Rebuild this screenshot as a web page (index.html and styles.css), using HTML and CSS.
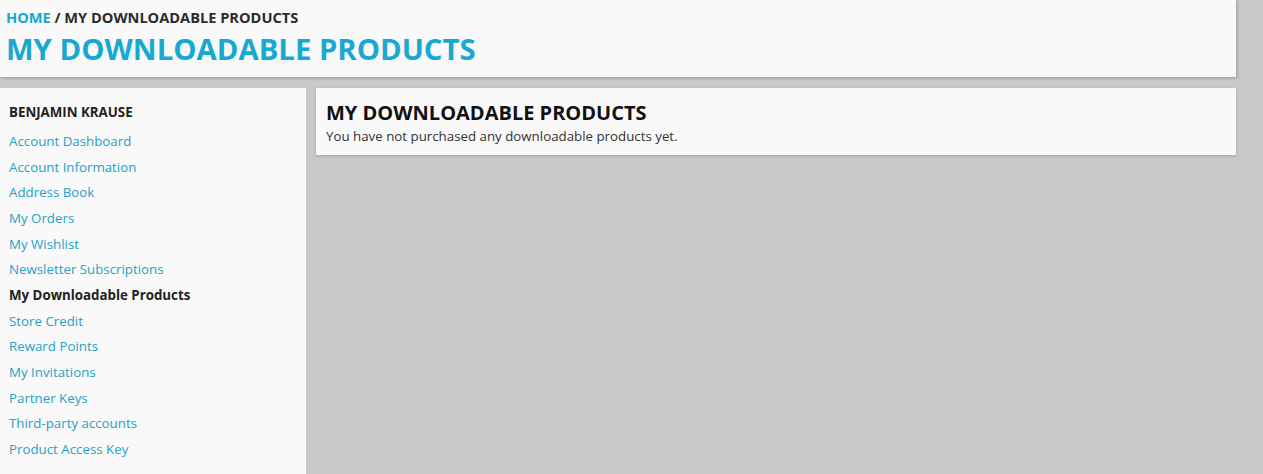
FILE: index.html
```html
<!DOCTYPE html>
<html lang="en">
<head>
    <meta charset="UTF-8">
    <title>My Downloadable Products</title>
    <link rel="stylesheet" href="styles.css">
</head>
<body>
    <div class="page-header">
        <div class="breadcrumbs"><a href="#">Home</a> / My Downloadable Products</div>
        <h1>My Downloadable Products</h1>
    </div>

    <div class="columns">
        <div class="sidebar">
            <h4>Benjamin Krause</h4>
            <ul class="account-nav">
                <li><a href="#">Account Dashboard</a></li>
                <li><a href="#">Account Information</a></li>
                <li><a href="#">Address Book</a></li>
                <li><a href="#">My Orders</a></li>
                <li><a href="#">My Wishlist</a></li>
                <li><a href="#">Newsletter Subscriptions</a></li>
                <li class="current"><strong>My Downloadable Products</strong></li>
                <li><a href="#">Store Credit</a></li>
                <li><a href="#">Reward Points</a></li>
                <li><a href="#">My Invitations</a></li>
                <li><a href="#">Partner Keys</a></li>
                <li><a href="#">Third-party accounts</a></li>
                <li><a href="#">Product Access Key</a></li>
            </ul>
        </div>

        <div class="main">
            <div class="panel">
                <h2>My Downloadable Products</h2>
                <p>You have not purchased any downloadable products yet.</p>
            </div>
        </div>
    </div>
</body>
</html>
```

FILE: styles.css
```css
body {
    margin: 0;
    font-family: 'Open Sans', 'Noto Sans', sans-serif;
    font-size: 13.3px;
    color: #333;
    background-color: #c9c9cb;
    height: 474px;
    overflow: hidden;
}
a {
    color: #26a1c4;
    text-decoration: none;
}
.page-header {
    width: 1236px;
    height: 77px;
    box-sizing: border-box;
    padding: 7px 6px 0;
    background-color: #f9f9f9;
    box-shadow: 1px 1px 3px rgba(0,0,0,0.25);
}
.breadcrumbs {
    font-size: 14.6px;
    font-weight: bold;
    text-transform: uppercase;
    color: #2b2b2b;
    line-height: 20px;
}
.breadcrumbs a {
    color: #17a7cf;
}
h1 {
    margin: 3px 0 0;
    font-size: 29.3px;
    line-height: 38px;
    text-transform: uppercase;
    color: #17a9d1;
}
.columns {
    display: flex;
    gap: 10px;
    margin-top: 11px;
    width: 1236px;
    align-items: flex-start;
}
.sidebar {
    width: 306px;
    height: 400px;
    flex-shrink: 0;
    box-sizing: border-box;
    padding: 15px 10px 0 9px;
    background-color: #f9f9f9;
}
.sidebar h4 {
    margin: 0 0 8px;
    font-size: 13.3px;
    line-height: 18px;
    text-transform: uppercase;
    color: #222;
}
.account-nav {
    list-style: none;
    margin: 0;
    padding: 0;
}
.account-nav li {
    line-height: 25.67px;
}
.account-nav .current strong {
    color: #222;
}
.main {
    flex-grow: 1;
}
.panel {
    background-color: #f9f9f9;
    padding: 12px 10px 10px;
    box-shadow: 0 1px 3px rgba(0,0,0,0.2);
}
.panel h2 {
    margin: 0 0 1px;
    font-size: 20px;
    line-height: 26px;
    text-transform: uppercase;
    color: #111;
}
.panel p {
    margin: 0;
    line-height: 18px;
    color: #333;
}
```
